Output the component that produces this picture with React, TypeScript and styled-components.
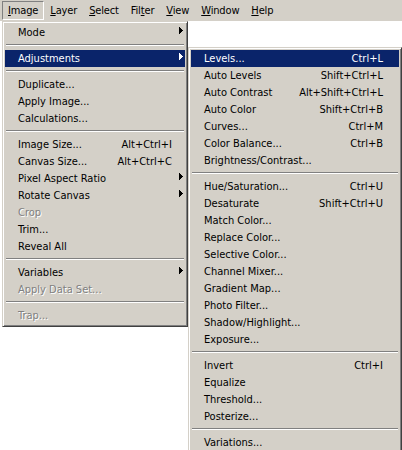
import React from "react";
import styled, { createGlobalStyle, css } from "styled-components";

const Global = createGlobalStyle`
  html, body { margin: 0; padding: 0; background: #fff; }
  body {
    font-family: "DejaVu Sans Condensed", "DejaVu Sans", Tahoma, sans-serif;
    font-stretch: condensed;
    font-size: 11px;
    color: #000;
  }
`;

const Screen = styled.div`
  position: relative;
  width: 402px;
  height: 450px;
  overflow: hidden;
  background: #fff;
`;

const MenuBar = styled.div`
  display: flex;
  align-items: flex-start;
  box-sizing: border-box;
  height: 21px;
  padding: 1px 0 0 2px;
  background: #d4d0c8;
`;

const BarItem = styled.div<{ $open?: boolean }>`
  position: relative;
  box-sizing: border-box;
  height: 19px;
  padding: 0 5px;
  display: flex;
  align-items: center;
  border: 1px solid transparent;
  white-space: nowrap;
  ${(p) =>
    p.$open &&
    css`
      border-color: #808080 #fff #fff #808080;
    `}
`;

const BarText = styled.span`
  letter-spacing: -0.15px;
`;

const Dropdown = styled.div<{ $width: number; $top: string; $left: string }>`
  position: absolute;
  z-index: 2;
  top: ${(p) => p.$top};
  left: ${(p) => p.$left};
  width: ${(p) => p.$width}px;
  box-sizing: border-box;
  display: flex;
  flex-direction: column;
  padding: 2px;
  background: #d4d0c8;
  border: 1px solid;
  border-color: #d4d0c8 #404040 #404040 #d4d0c8;
  box-shadow: inset 1px 1px 0 #fff, inset -1px -1px 0 #808080;
  letter-spacing: normal;
`;

const Row = styled.div<{ $active?: boolean; $disabled?: boolean; $pr: number }>`
  position: relative;
  height: 17px;
  display: grid;
  grid-template-columns: 1fr auto ${(p) => p.$pr}px;
  align-items: center;
  padding-left: 13px;
  white-space: nowrap;
  background: ${(p) => (p.$active ? "#0a246a" : "transparent")};
  color: ${(p) => (p.$active ? "#fff" : p.$disabled ? "#808080" : "#000")};
  text-shadow: ${(p) => (p.$disabled ? "1px 1px 0 #fff" : "none")};
`;

const Label = styled.span`
  line-height: 17px;
`;

const Shortcut = styled.span`
  line-height: 17px;
  padding-left: 12px;
`;

const ArrowCell = styled.span`
  align-self: start;
  display: flex;
  justify-content: flex-end;
  padding: 3px 2px 0 0;
`;

const Separator = styled.div`
  height: 9px;
  &::before {
    content: "";
    display: block;
    margin: 3px 1px 0;
    height: 1px;
    background: #808080;
    border-bottom: 1px solid #fff;
  }
`;

const SubArrow = () => (
  <svg width="4" height="7" viewBox="0 0 4 7" shapeRendering="crispEdges">
    <path d="M0 0h1v1h1v1h1v1h1v1h-1v1h-1v1h-1v1h-1z" fill="currentColor" />
  </svg>
);

type Entry =
  | "sep"
  | {
      label: string;
      shortcut?: string;
      sub?: boolean;
      active?: boolean;
      disabled?: boolean;
      open?: Entry[];
    };

const adjustments: Entry[] = [
  { label: "Levels...", shortcut: "Ctrl+L", active: true },
  { label: "Auto Levels", shortcut: "Shift+Ctrl+L" },
  { label: "Auto Contrast", shortcut: "Alt+Shift+Ctrl+L" },
  { label: "Auto Color", shortcut: "Shift+Ctrl+B" },
  { label: "Curves...", shortcut: "Ctrl+M" },
  { label: "Color Balance...", shortcut: "Ctrl+B" },
  { label: "Brightness/Contrast..." },
  "sep",
  { label: "Hue/Saturation...", shortcut: "Ctrl+U" },
  { label: "Desaturate", shortcut: "Shift+Ctrl+U" },
  { label: "Match Color..." },
  { label: "Replace Color..." },
  { label: "Selective Color..." },
  { label: "Channel Mixer..." },
  { label: "Gradient Map..." },
  { label: "Photo Filter..." },
  { label: "Shadow/Highlight..." },
  { label: "Exposure..." },
  "sep",
  { label: "Invert", shortcut: "Ctrl+I" },
  { label: "Equalize" },
  { label: "Threshold..." },
  { label: "Posterize..." },
  "sep",
  { label: "Variations..." },
];

const imageMenu: Entry[] = [
  { label: "Mode", sub: true },
  "sep",
  { label: "Adjustments", sub: true, active: true, open: adjustments },
  "sep",
  { label: "Duplicate..." },
  { label: "Apply Image..." },
  { label: "Calculations..." },
  "sep",
  { label: "Image Size...", shortcut: "Alt+Ctrl+I" },
  { label: "Canvas Size...", shortcut: "Alt+Ctrl+C" },
  { label: "Pixel Aspect Ratio", sub: true },
  { label: "Rotate Canvas", sub: true },
  { label: "Crop", disabled: true },
  { label: "Trim..." },
  { label: "Reveal All" },
  "sep",
  { label: "Variables", sub: true },
  { label: "Apply Data Set...", disabled: true },
  "sep",
  { label: "Trap...", disabled: true },
];

const MenuItems = ({ items, pr }: { items: Entry[]; pr: number }) => (
  <>
    {items.map((it, i) =>
      it === "sep" ? (
        <Separator key={i} />
      ) : (
        <Row key={i} $active={it.active} $disabled={it.disabled} $pr={pr}>
          <Label>{it.label}</Label>
          <Shortcut>{it.shortcut ?? ""}</Shortcut>
          <ArrowCell>{it.sub && <SubArrow />}</ArrowCell>
          {it.open && (
            <Dropdown $width={214} $top="-3px" $left="calc(100% + 3px)">
              <MenuItems items={it.open} pr={16} />
            </Dropdown>
          )}
        </Row>
      )
    )}
  </>
);

const bar: { pre: string; key: string; post: string; open?: boolean }[] = [
  { pre: "", key: "I", post: "mage", open: true },
  { pre: "", key: "L", post: "ayer" },
  { pre: "", key: "S", post: "elect" },
  { pre: "Fil", key: "t", post: "er" },
  { pre: "", key: "V", post: "iew" },
  { pre: "", key: "W", post: "indow" },
  { pre: "", key: "H", post: "elp" },
];

export default function App() {
  return (
    <Screen>
      <Global />
      <MenuBar>
        {bar.map((b) => (
          <BarItem key={b.key} $open={b.open}>
            <BarText>
              {b.pre}
              <u>{b.key}</u>
              {b.post}
            </BarText>
            {b.open && (
              <Dropdown $width={186} $top="calc(100% + 2px)" $left="-1px">
                <MenuItems items={imageMenu} pr={13} />
              </Dropdown>
            )}
          </BarItem>
        ))}
      </MenuBar>
    </Screen>
  );
}
